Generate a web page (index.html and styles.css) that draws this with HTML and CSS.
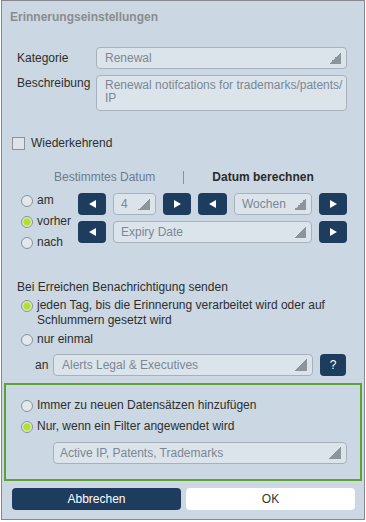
FILE: index.html
```html
<html>
<head><link rel="stylesheet" href="styles.css"></head>
<body>

<div class="dialog">
   <div class="title">Erinnerungseinstellungen</div>

   <div class="field-row">
      <div class="label">Kategorie</div>
      <div class="select wide">Renewal</div>
   </div>
   <div class="field-row memo-row">
      <div class="label">Beschreibung</div>
      <div class="memo">Renewal notifcations for trademarks/patents/<br>IP</div>
   </div>

   <div class="check-row"><span class="checkbox"></span>Wiederkehrend</div>

   <div class="date-head">
      <span class="tab-off">Bestimmtes Datum</span>
      <span class="tab-sep"></span>
      <span class="tab-on">Datum berechnen</span>
   </div>

   <div class="date-area">
      <div class="radio-col">
         <div class="opt"><span class="radio"></span>am</div>
         <div class="opt"><span class="radio on"></span>vorher</div>
         <div class="opt"><span class="radio"></span>nach</div>
      </div>
      <div class="date-grid">
         <div class="nav prev"></div>
         <div class="select">4</div>
         <div class="nav next"></div>
         <div class="nav prev"></div>
         <div class="select">Wochen</div>
         <div class="nav next"></div>
         <div class="nav prev"></div>
         <div class="select span4">Expiry Date</div>
         <div class="nav next"></div>
      </div>
   </div>

   <div class="section-head">Bei Erreichen Benachrichtigung senden</div>
   <div class="opt multi"><span class="radio on"></span><span>jeden Tag, bis die Erinnerung verarbeitet wird oder auf<br>Schlummern gesetzt wird</span></div>
   <div class="opt once"><span class="radio"></span>nur einmal</div>
   <div class="to-row">
      <div class="to-label">an</div>
      <div class="select to-select">Alerts Legal &amp; Executives</div>
      <div class="help">?</div>
   </div>

   <div class="filter-box">
      <div class="opt"><span class="radio"></span>Immer zu neuen Datensätzen hinzufügen</div>
      <div class="opt"><span class="radio on"></span>Nur, wenn ein Filter angewendet wird</div>
      <div class="select filter-select">Active IP, Patents, Trademarks</div>
   </div>

   <div class="buttons">
      <div class="btn cancel">Abbrechen</div>
      <div class="btn ok">OK</div>
   </div>
</div>

</body>
</html>
```

FILE: styles.css
```css
html, body
{
	margin:0;
	background-color:#ffffff;
}

.dialog
{
	box-sizing:border-box;
	width:364px;
	height:520px;
	margin-left:1px;
	border:1px solid #85898e;
	background-color:#cbd7e2;
	font:12px "Liberation Sans", Arial, sans-serif;
	color:#2e2e2e;
}

.title
{
	padding:9px 0 0 8px;
	line-height:15px;
	font-weight:bold;
	color:#8a8c8e;
}

/* generic drop-down look */
.select
{
	position:relative;
	box-sizing:border-box;
	height:22px;
	line-height:20px;
	padding-left:7px;
	border:1px solid #a6b1bb;
	border-radius:4px;
	background-color:#dce4eb;
	color:#7a8794;
	white-space:nowrap;
	overflow:hidden;
}
.select::after
{
	content:"";
	position:absolute;
	right:5px;
	bottom:4px;
	width:12px;
	height:12px;
	background:linear-gradient(to bottom right, transparent 50%, #8d959c 50%);
}

.field-row
{
	display:flex;
	padding-left:15px;
	margin-top:22px;
}
.field-row .label
{
	width:79px;
	line-height:22px;
}
.select.wide { width:251px; padding-left:8px; }

.memo-row { margin-top:6px; }
.memo-row .label
{
	line-height:15px;
	padding-top:1px;
}
.memo
{
	box-sizing:border-box;
	width:251px;
	height:36px;
	padding:3px 0 0 8px;
	line-height:13px;
	border:1px solid #a6b1bb;
	border-radius:4px;
	background-color:#dce4eb;
	color:#7a8794;
}

.check-row
{
	display:flex;
	align-items:center;
	margin-top:25px;
	padding-left:10px;
	line-height:15px;
}
.checkbox
{
	box-sizing:border-box;
	width:13px;
	height:13px;
	margin-right:6px;
	border:1px solid #8c9298;
	background-color:#dde4ea;
}

.date-head
{
	display:flex;
	align-items:center;
	margin-top:19px;
	padding-left:52px;
	line-height:15px;
}
.tab-off { color:#6b7d8f; }
.tab-sep
{
	width:0;
	height:13px;
	margin-left:28px;
	border-left:1px solid #8a929a;
}
.tab-on
{
	margin-left:28px;
	font-weight:bold;
	color:#2b2b2b;
}

.date-area
{
	display:flex;
	margin-top:5px;
}
.radio-col
{
	width:57px;
	padding-left:19px;
}
.date-grid
{
	display:grid;
	grid-template-columns:28px 43px 28px 29px 78px 28px;
	grid-auto-rows:22px;
	column-gap:7px;
	row-gap:6px;
	margin-top:3px;
}
.date-grid .select { padding-left:7px; }
.span4 { grid-column:span 4; }

.nav
{
	display:flex;
	align-items:center;
	justify-content:center;
	border-radius:4px;
	background-color:#1d3c5e;
}
.nav::before
{
	content:"";
	width:0;
	height:0;
	border-top:4px solid transparent;
	border-bottom:4px solid transparent;
}
.nav.prev::before { border-right:7px solid #ffffff; }
.nav.next::before { border-left:7px solid #ffffff; }

/* radio options */
.opt
{
	display:flex;
	align-items:center;
	line-height:21px;
}
.radio
{
	box-sizing:border-box;
	flex:none;
	width:12px;
	height:12px;
	margin-right:4px;
	border:1px solid #8a9198;
	border-radius:50%;
	background-color:#e2e8ed;
}
.radio.on
{
	background:radial-gradient(circle, #b2e032 0, #b2e032 3px, #d4ea90 4px, #e2e8ed 5px);
}

.section-head
{
	margin-top:27px;
	padding-left:15px;
	line-height:15px;
}
.opt.multi
{
	align-items:flex-start;
	margin-top:3px;
	padding-left:19px;
	line-height:15px;
}
.opt.multi .radio { margin-top:2px; }
.opt.once
{
	margin-top:4px;
	padding-left:19px;
	line-height:15px;
}

.to-row
{
	display:flex;
	margin-top:7px;
	padding-left:33px;
}
.to-label
{
	width:18px;
	line-height:22px;
}
.to-select { width:260px; padding-left:8px; }
.help
{
	width:26px;
	height:22px;
	margin-left:7px;
	line-height:22px;
	text-align:center;
	border-radius:4px;
	background-color:#1d3c5e;
	color:#ffffff;
}

.filter-box
{
	box-sizing:border-box;
	width:358px;
	height:98px;
	margin:7px 0 0 2px;
	padding:10px 0 0 15px;
	border:2px solid #5da234;
}
.filter-select
{
	width:294px;
	margin:5px 0 0 32px;
	padding-left:6px;
}

.buttons
{
	display:flex;
	margin-top:7px;
	padding-left:10px;
}
.btn
{
	width:169px;
	height:22px;
	line-height:22px;
	text-align:center;
	border-radius:4px;
}
.btn.cancel
{
	background-color:#1d3c5e;
	color:#ffffff;
}
.btn.ok
{
	margin-left:5px;
	background-color:#ffffff;
	color:#333333;
}
```
